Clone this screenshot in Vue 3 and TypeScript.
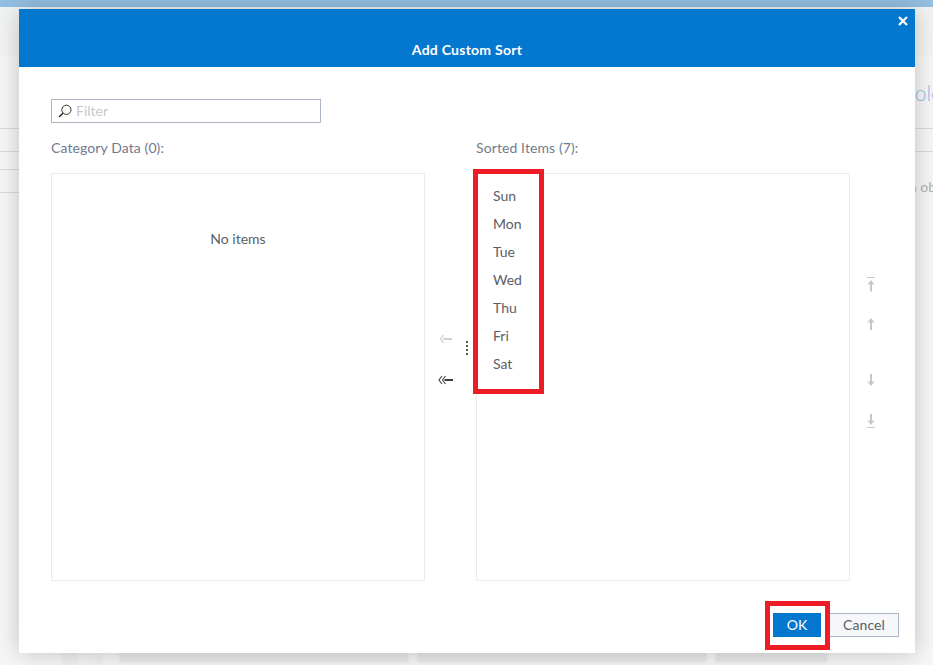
<script setup lang="ts">
const sorted: string[] = ['Sun', 'Mon', 'Tue', 'Wed', 'Thu', 'Fri', 'Sat']
</script>

<template>
  <div class="page">
    <div class="topbar"></div>
    <div class="band"></div>
    <div class="sheet">
      <div class="rows">
        <div class="row"></div>
        <div class="row short"></div>
      </div>
      <div class="backtitle">ole</div>
      <div class="backnote">n ob</div>
    </div>
    <div class="cards">
      <span class="tab t1"></span><span class="tab t2"></span><span class="tab t3"></span>
      <div class="card c1"></div>
      <div class="card c2"></div>
      <div class="card c3"></div>
    </div>

    <section class="dialog">
      <header class="head">
        <svg class="close" width="10" height="10" viewBox="0 0 10 10"><path d="M1 1 9 9M9 1 1 9" stroke="#fff" stroke-width="2.2" fill="none" /></svg>
        <h1>Add Custom Sort</h1>
      </header>
      <div class="body">
        <div class="filter">
          <svg width="14" height="14" viewBox="0 0 14 14"><circle cx="8.4" cy="5.8" r="4.6" fill="none" stroke="#333" stroke-width="1" /><path d="M5 9.2 1 13" stroke="#222" stroke-width="1.4" fill="none" /></svg>
          <span>Filter</span>
        </div>
        <div class="panes">
          <div class="pane">
            <div class="label">Category Data (0):</div>
            <div class="list empty">No items</div>
          </div>
          <div class="mid">
            <svg class="a1" width="13" height="10" viewBox="0 0 13 10"><path d="M4.500 1 1.500 5 4.500 9" fill="none" stroke="#c9ccd2" stroke-width="1.200" /><path d="M4 5H13" fill="none" stroke="#c9ccd2" stroke-width="1.800" /></svg>
            <svg class="a2" width="15" height="10" viewBox="0 0 15 10"><path d="M4 1 1 5 4 9M7.500 1 4.500 5 7.500 9" fill="none" stroke="#3a3f47" stroke-width="1.100" /><path d="M6.500 5H15" fill="none" stroke="#22262c" stroke-width="1.800" /></svg>
            <div class="grip"><i></i><i></i><i></i><i></i></div>
          </div>
          <div class="pane">
            <div class="label">Sorted Items (7):</div>
            <div class="list items">
              <div v-for="s in sorted" :key="s" class="item">{{ s }}</div>
            </div>
          </div>
          <div class="order">
            <svg width="10" height="15" viewBox="0 0 10 15"><path d="M1 .5H9" stroke="#c4c7cd" /><path d="M5 14.500V5" stroke="#c4c7cd" stroke-width="2" /><path d="M1.500 7.500 5 3 8.500 7.500Z" fill="#c4c7cd" /></svg>
            <svg class="o2" width="10" height="13" viewBox="0 0 10 13"><path d="M5 13V3" stroke="#c4c7cd" stroke-width="2" /><path d="M1.500 5.500 5 1 8.500 5.500Z" fill="#c4c7cd" /></svg>
            <svg class="o3" width="10" height="13" viewBox="0 0 10 13"><path d="M5 0V10" stroke="#c4c7cd" stroke-width="2" /><path d="M1.500 7.500 5 12 8.500 7.500Z" fill="#c4c7cd" /></svg>
            <svg class="o4" width="10" height="14" viewBox="0 0 10 14"><path d="M1 13.500H9" stroke="#c4c7cd" /><path d="M5 0V8" stroke="#c4c7cd" stroke-width="2" /><path d="M1.500 6.500 5 11 8.500 6.500Z" fill="#c4c7cd" /></svg>
          </div>
        </div>
        <footer class="foot">
          <button class="btn ok">OK</button>
          <button class="btn cancel">Cancel</button>
        </footer>
      </div>
    </section>

    <div class="mark mark-list"></div>
    <div class="mark mark-ok"></div>
  </div>
</template>

<style>
html, body { margin: 0; background: #f4f4f5; }
</style>

<style scoped>
.page { position: relative; width: 933px; height: 665px; overflow: hidden; background: #f6f6f7; font-family: Lato, "Liberation Sans", sans-serif; }
.topbar { height: 7px; background: #93bfe2; }
.band { height: 48px; background: #f2f3f3; }
.sheet { position: relative; height: 600px; }
.rows { padding-top: 73px; }
.row { height: 22px; margin-bottom: 17px; border-top: 1px solid #d9dbe3; border-bottom: 1px solid #d9dbe3; }
.short { width: 19px; }
.backtitle { position: absolute; right: -9px; top: 25px; font-size: 21px; font-weight: 300; color: #8fc0e6; }
.backnote { position: absolute; right: -3px; top: 123px; font-size: 14px; color: #b2b2b2; }
.cards { position: absolute; left: 0; right: 0; top: 630px; height: 35px; }
.tab { position: absolute; top: 0; height: 35px; }
.t1 { left: 62px; width: 16px; background: #efeff0; }
.t2 { left: 78px; width: 17px; background: #f4f4f5; }
.t3 { left: 95px; width: 8px; background: #f0f1f3; }
.card { position: absolute; top: 0; height: 31px; background: #e8e8e8; box-shadow: 0 1px 3px rgba(0,0,0,.08); }
.c1 { left: 120px; width: 288px; }
.c2 { left: 418px; width: 288px; }
.c3 { left: 716px; width: 111px; }

.dialog { position: absolute; left: 19px; top: 9px; width: 896px; height: 644px; display: flex; flex-direction: column; background: #fff; box-shadow: 0 0 22px rgba(0,0,0,.22); }
.head { position: relative; height: 58px; box-sizing: border-box; background: #0478cf; color: #fff; text-align: center; }
.head h1 { margin: 0; padding: 32px 0 0; font-size: 14px; line-height: 17px; font-weight: 700; letter-spacing: .25px; }
.close { position: absolute; right: 7px; top: 7px; }
.body { flex: 1; display: flex; flex-direction: column; padding: 32px 16px 16px 32px; }
.filter { box-sizing: border-box; width: 270px; height: 24px; border: 1px solid #adb6c4; display: flex; align-items: center; gap: 4px; padding-left: 6px; font-size: 14px; line-height: 20px; color: #c3c8d0; }
.panes { display: flex; margin-top: 16px; }
.pane { width: 374px; }
.label { height: 34px; line-height: 18px; font-size: 14px; letter-spacing: .1px; color: #717b8e; }
.list { box-sizing: border-box; height: 408px; border: 1px solid #ebebeb; }
.empty { padding-top: 56px; text-align: center; font-size: 14px; line-height: 18px; color: #5a5e66; }
.items { padding-top: 8px; }
.item { height: 28px; line-height: 28px; padding-left: 16px; font-size: 14px; color: #5a5e66; }
.mid { position: relative; width: 51px; }
.a1 { position: absolute; left: 14px; top: 195px; }
.a2 { position: absolute; left: 13px; top: 236px; }
.grip { position: absolute; left: 41px; top: 202px; display: flex; flex-direction: column; gap: 2px; }
.grip i { display: block; width: 2px; height: 2px; background: #555; }
.order { display: flex; flex-direction: column; align-items: center; width: 42px; padding-top: 138px; }
.order svg { display: block; }
.o2 { margin-top: 25px; }
.o3 { margin-top: 44px; }
.o4 { margin-top: 27px; }
.foot { display: flex; justify-content: flex-end; margin-top: auto; }
.btn { box-sizing: border-box; height: 24px; font: inherit; font-size: 14px; line-height: 22px; padding: 0 0 1px; border-radius: 0; }
.ok { width: 48px; background: #0478cf; border: 0; color: #fff; }
.cancel { width: 70px; margin-left: 8px; background: #f5f7fa; border: 1px solid #aeb7c4; color: #5a5e66; letter-spacing: .1px; }
.mark { position: absolute; box-sizing: border-box; border: 5px solid #ee1c25; }
.mark-list { left: 473px; top: 169px; width: 71px; height: 225px; }
.mark-ok { left: 765px; top: 601px; width: 65px; height: 49px; }
</style>
